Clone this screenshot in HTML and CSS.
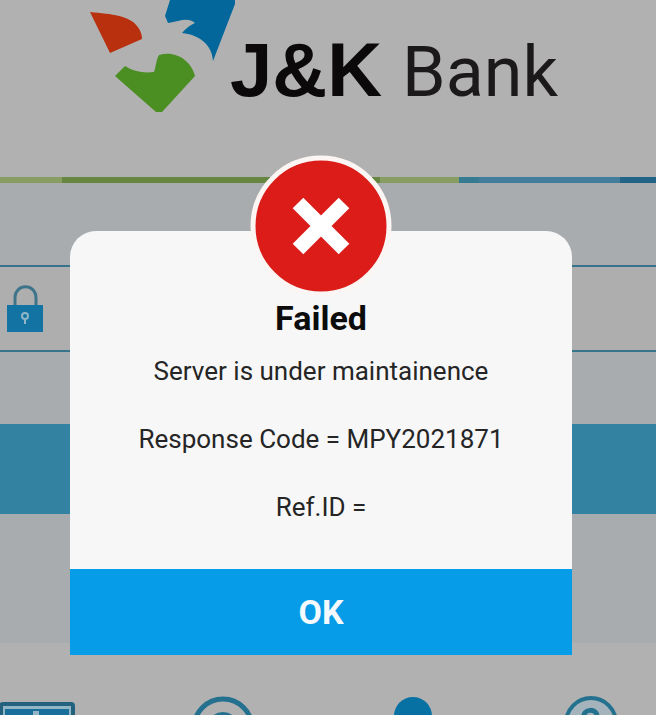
FILE: index.html
```html
<!DOCTYPE html>
<html lang="en">

<head>
  <meta charset="utf-8">
  <meta name="viewport" content="width=device-width, initial-scale=1">
  <title>J&amp;K Bank</title>
  <link rel="stylesheet" href="styles.css">
</head>

<body>
  <div class="page">
    <header class="header">
      <svg class="logo-mark" viewBox="0 0 150 114" aria-hidden="true">
        <path fill="#b9300f" d="M2 12 C24 14 42 16 49 26 C53 31 54 35 54 39 L22 53 Z" />
        <path fill="#04679c" d="M82 0 L147 0 L147 4 L125 61 C124 44 111 35 94 33 Q100 26 107 23 C100 17 92 21 80 23 L77 16 Z" />
        <path fill="#4b8e22" d="M27 76 L37 66 Q49 74 66 72 C68 67 68 60 71 55 C87 50 103 60 107 76 L74 112 L68 112 Z" />
      </svg>
      <div class="logo-text"><b>J&amp;K</b> <span>Bank</span></div>
    </header>

    <div class="stripe"></div>

    <form class="login">
      <div class="field">
        <svg class="lock" viewBox="0 0 36 47" aria-hidden="true">
          <path fill="none" stroke="#3d7489" stroke-width="3" d="M8 21 V13 C8 -2 29 -2 29 13 V21" />
          <rect y="20" width="36" height="27" fill="#1374a3" />
          <circle cx="18" cy="31" r="3" fill="none" stroke="#8fb5c7" stroke-width="2" />
          <path stroke="#8fb5c7" stroke-width="2" d="M18 34 V39" />
        </svg>
        <input class="pin" type="password" aria-label="PIN">
      </div>
      <button class="submit" type="button" aria-label="Login"></button>
    </form>

    <nav class="menu">
      <a href="#" aria-label="Recharge">
        <svg width="76" height="60" viewBox="0 0 76 60">
          <rect x="2" y="8" width="72" height="50" rx="2" fill="#91b5c4" stroke="#23627f" stroke-width="4" />
          <rect x="6" y="13" width="64" height="40" fill="#176f9a" />
          <path fill="#91b5c4" d="M34 15 h6 v5 h-6z" />
        </svg>
      </a>
      <a href="#" aria-label="Locate">
        <svg width="64" height="64" viewBox="0 0 64 64">
          <circle cx="32" cy="32" r="29" fill="none" stroke="#24708f" stroke-width="5" />
          <circle cx="32" cy="32" r="16" fill="#24708f" />
        </svg>
      </a>
      <a href="#" aria-label="Profile">
        <svg width="64" height="64" viewBox="0 0 64 64">
          <circle cx="36" cy="20" r="19" fill="#0871a3" />
          <path fill="#0871a3" d="M8 64 Q8 41 36 41 Q64 41 64 64z" />
        </svg>
      </a>
      <a href="#" aria-label="Help">
        <svg width="64" height="64" viewBox="0 0 64 64">
          <circle cx="28" cy="27" r="25" fill="#a5b4bc" stroke="#24708f" stroke-width="4" />
          <path fill="none" stroke="#24708f" stroke-width="5" d="M21 22 C19 12 35 12 34 21 Q34 26 28 29 V34" />
        </svg>
      </a>
    </nav>
  </div>

  <div class="overlay">
    <div class="dialog" role="alertdialog" aria-labelledby="dialog-title" aria-describedby="dialog-text">
      <svg class="dialog-icon" viewBox="0 0 142 142" aria-hidden="true">
        <circle cx="71" cy="71" r="68" fill="#db1c18" stroke="#fbf5f3" stroke-width="5" />
        <path stroke="#fff" stroke-width="15" d="M48 48 L94 94 M94 48 L48 94" />
      </svg>
      <h1 class="dialog-title" id="dialog-title">Failed</h1>
      <div class="dialog-text" id="dialog-text">
        <p>Server is under maintainence</p>
        <p>Response Code = MPY2021871</p>
        <p>Ref.ID =</p>
      </div>
      <button class="ok" type="button">OK</button>
    </div>
  </div>
</body>

</html>
```
FILE: styles.css
```css
* {
  box-sizing: border-box;
}

body {
  margin: 0;
  font-family: Roboto, sans-serif;
  background: #b1b1b1;
}

.page {
  height: 100vh;
  overflow: hidden;
}

.header {
  display: flex;
  height: 177px;
  padding-left: 88px;
}

.logo-mark {
  flex: none;
  width: 150px;
  height: 114px;
}

.logo-text {
  display: flex;
  align-items: baseline;
  gap: 20px;
  margin-left: -8px;
  padding-top: 28px;
  height: 114px;
  font-size: 70px;
  line-height: 84px;
  color: #1b191a;
}

.logo-text b {
  font-family: "Liberation Sans", sans-serif;
  font-size: 76px;
  color: #0b090a;
}

.stripe {
  height: 6px;
  background: linear-gradient(90deg, #879d61 0 9.5%, #668642 9.5% 58%, #879d61 58% 70%, #367b91 70% 73%, #427d9c 73% 94.5%, #226488 94.5%);
}

.login {
  height: 460px;
  padding-top: 82px;
  background: #a9acaf;
}

.field {
  display: flex;
  align-items: center;
  gap: 16px;
  height: 87px;
  padding-left: 7px;
  background: #aeaeae;
  border: solid #37748b;
  border-width: 2px 0;
}

.lock {
  width: 36px;
  height: 47px;
}

.pin {
  flex: 1;
  height: 60px;
  border: 0;
  background: none;
  font-size: 26px;
}

.submit {
  display: block;
  width: 100%;
  height: 90px;
  margin-top: 72px;
  border: 0;
  background: #3482a2;
}

.menu {
  display: grid;
  grid-template-columns: repeat(4, 1fr);
  justify-items: center;
  width: calc(100% + 88px);
  margin-left: -56px;
  padding-top: 53px;
}

.overlay {
  position: fixed;
  inset: 0;
  padding: 231px 84px 0 70px;
}

.dialog {
  position: relative;
  padding-top: 68px;
  background: #f7f7f8;
  border-radius: 26px 26px 0 0;
  text-align: center;
}

.dialog-icon {
  position: absolute;
  top: -76px;
  left: calc(50% - 71px);
  width: 142px;
  height: 142px;
}

.dialog-title {
  margin: 0;
  font-size: 34px;
  line-height: 38px;
  color: #0c0c0c;
}

.dialog-text {
  padding: 17px 20px 45px;
  font-size: 26px;
  line-height: 34px;
  color: #252525;
}

.dialog-text p {
  margin: 0 0 34px;
}

.dialog-text p:last-child {
  margin-bottom: 0;
}

.ok {
  display: block;
  width: 100%;
  height: 86px;
  border: 0;
  background: #079ce7;
  color: #f4fafd;
  font-family: inherit;
  font-size: 34px;
  font-weight: 700;
}
```
